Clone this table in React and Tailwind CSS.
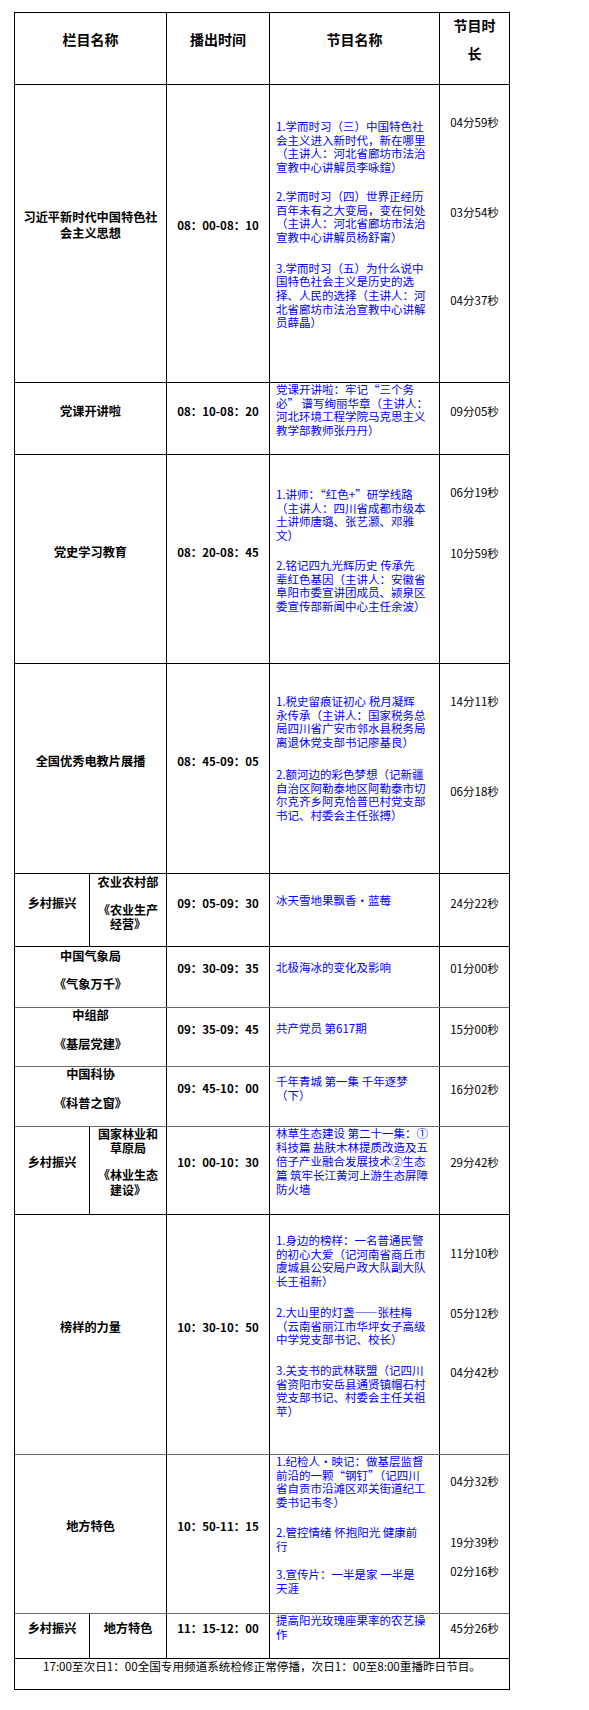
import React from "react";

const cjk = "font-['Noto_Sans_CJK_SC',sans-serif]";

const Row = ({ h, line = "black", children }) => (
  <div
    className={`flex ${h} ${
      line === "none" ? "" : line === "gray" ? "border-t border-[#6a6a6a]" : "border-t border-black"
    }`}
  >
    {children}
  </div>
);

// column shells
const C1 = ({ children }) => (
  <div className="w-[151px] shrink-0 flex flex-col items-center text-[12.2px] leading-[14px] font-bold text-black">
    {children}
  </div>
);
const C1a = ({ children }) => (
  <div className="w-[74px] shrink-0 flex flex-col items-center text-[12.2px] leading-[14px] font-bold text-black">
    {children}
  </div>
);
const C1b = ({ children }) => (
  <div className="w-[77px] shrink-0 border-l border-black flex flex-col items-center text-[12.2px] leading-[14px] font-bold text-black">
    {children}
  </div>
);
const C2 = ({ mt, children }) => (
  <div className="w-[103px] shrink-0 border-l border-black flex flex-col items-center">
    <div className={`${mt} text-[11.5px] leading-[14px] font-bold text-black whitespace-nowrap`}>{children}</div>
  </div>
);
const C3 = ({ children }) => (
  <div className="w-[170px] shrink-0 border-l border-black flex flex-col pl-[6px] text-[11.5px] leading-[13.7px] text-[#0000ff]">
    {children}
  </div>
);
const C4 = ({ children }) => (
  <div className="w-[70px] shrink-0 border-l border-black flex flex-col items-center text-[11.5px] leading-[14px] text-black">
    {children}
  </div>
);

const Ln = ({ className = "", children }) => (
  <div className={`whitespace-nowrap ${className}`}>{children}</div>
);

// several lines kept in one text block, broken by hand
const Blue = ({ mt = "", lines }) => (
  <div className={`whitespace-nowrap ${mt}`}>
    {lines.map((l, i) => (
      <React.Fragment key={i}>
        {i > 0 && <br />}
        {l}
      </React.Fragment>
    ))}
  </div>
);

export default function App() {
  return (
    <div className={`min-h-[1710px] bg-white pt-[12px] pl-[14px] ${cjk}`} lang="zh-CN">
      <div className="w-[496px] border border-black">
        {/* header */}
        <Row h="h-[71px]" line="none">
          <div className="w-[151px] shrink-0 flex flex-col items-center text-[14px] leading-[18px] font-bold">
            <Ln className="mt-[17px]">栏目名称</Ln>
          </div>
          <div className="w-[103px] shrink-0 border-l border-black flex flex-col items-center text-[14px] leading-[18px] font-bold">
            <Ln className="mt-[17px]">播出时间</Ln>
          </div>
          <div className="w-[170px] shrink-0 border-l border-black flex flex-col items-center text-[14px] leading-[18px] font-bold">
            <Ln className="mt-[17px]">节目名称</Ln>
          </div>
          <div className="w-[70px] shrink-0 border-l border-black flex flex-col items-center text-[14px] leading-[18px] font-bold">
            <Ln className="mt-[3px]">节目时</Ln>
            <Ln className="mt-[10px]">长</Ln>
          </div>
        </Row>

        {/* 习近平新时代 */}
        <Row h="h-[298px]">
          <C1>
            <div className="mt-[124px] leading-[16px] text-center whitespace-nowrap">
              习近平新时代中国特色社
              <br />
              会主义思想
            </div>
          </C1>
          <C2 mt="mt-[133px]">08：00-08：10</C2>
          <C3>
            <Blue
              mt="mt-[35px]"
              lines={["1.学而时习（三）中国特色社", "会主义进入新时代，新在哪里", "（主讲人：河北省廊坊市法治", "宣教中心讲解员李咏鍹）"]}
            />
            <Blue
              mt="mt-[15px]"
              lines={["2.学而时习（四）世界正经历", "百年未有之大变局，变在何处", "（主讲人：河北省廊坊市法治", "宣教中心讲解员杨舒甯）"]}
            />
            <Blue
              mt="mt-[17px]"
              lines={["3.学而时习（五）为什么说中", "国特色社会主义是历史的选", "择、人民的选择（主讲人：河", "北省廊坊市法治宣教中心讲解", "员薛晶）"]}
            />
          </C3>
          <C4>
            <Ln className="mt-[30px]">04分59秒</Ln>
            <Ln className="mt-[76px]">03分54秒</Ln>
            <Ln className="mt-[74px]">04分37秒</Ln>
          </C4>
        </Row>

        {/* 党课开讲啦 */}
        <Row h="h-[72px]">
          <C1>
            <Ln className="mt-[21px]">党课开讲啦</Ln>
          </C1>
          <C2 mt="mt-[21px]">08：10-08：20</C2>
          <C3>
            <Blue lines={["党课开讲啦：牢记“三个务", "必” 谱写绚丽华章（主讲人：", "河北环境工程学院马克思主义", "教学部教师张丹丹）"]} />
          </C3>
          <C4>
            <Ln className="mt-[21px]">09分05秒</Ln>
          </C4>
        </Row>

        {/* 党史学习教育 */}
        <Row h="h-[209px]">
          <C1>
            <Ln className="mt-[90px]">党史学习教育</Ln>
          </C1>
          <C2 mt="mt-[90px]">08：20-08：45</C2>
          <C3>
            <Blue
              mt="mt-[33px]"
              lines={["1.讲师：“红色+”研学线路", "（主讲人：四川省成都市级本", "土讲师唐璐、张艺灏、邓雅", "文）"]}
            />
            <Blue
              mt="mt-[16px]"
              lines={["2.铭记四九光辉历史 传承先", "辈红色基因（主讲人：安徽省", "阜阳市委宣讲团成员、颍泉区", "委宣传部新闻中心主任余波）"]}
            />
          </C3>
          <C4>
            <Ln className="mt-[30px]">06分19秒</Ln>
            <Ln className="mt-[47px]">10分59秒</Ln>
          </C4>
        </Row>

        {/* 全国优秀电教片展播 */}
        <Row h="h-[210px]">
          <C1>
            <Ln className="mt-[90px]">全国优秀电教片展播</Ln>
          </C1>
          <C2 mt="mt-[90px]">08：45-09：05</C2>
          <C3>
            <Blue
              mt="mt-[31px]"
              lines={["1.税史留痕证初心 税月凝辉", "永传承（主讲人：国家税务总", "局四川省广安市邻水县税务局", "离退休党支部书记廖基良）"]}
            />
            <Blue
              mt="mt-[18px]"
              lines={["2.额河边的彩色梦想（记新疆", "自治区阿勒泰地区阿勒泰市切", "尔克齐乡阿克恰普巴村党支部", "书记、村委会主任张搏）"]}
            />
          </C3>
          <C4>
            <Ln className="mt-[30px]">14分11秒</Ln>
            <Ln className="mt-[76px]">06分18秒</Ln>
          </C4>
        </Row>

        {/* 乡村振兴 农业农村部 */}
        <Row h="h-[73px]">
          <C1a>
            <Ln className="mt-[22px]">乡村振兴</Ln>
          </C1a>
          <C1b>
            <Ln className="mt-[1px]">农业农村部</Ln>
            <div className="mt-[14px] text-[12px] leading-[14.2px] text-center whitespace-nowrap">
              《农业生产
              <br />
              经营》
            </div>
          </C1b>
          <C2 mt="mt-[22px]">09：05-09：30</C2>
          <C3>
            <Blue mt="mt-[20px]" lines={["冰天雪地果飘香·蓝莓"]} />
          </C3>
          <C4>
            <Ln className="mt-[22px]">24分22秒</Ln>
          </C4>
        </Row>

        {/* 中国气象局 */}
        <Row h="h-[61px]">
          <C1>
            <Ln className="mt-[2px]">中国气象局</Ln>
            <Ln className="mt-[14px]">《气象万千》</Ln>
          </C1>
          <C2 mt="mt-[14px]">09：30-09：35</C2>
          <C3>
            <Blue mt="mt-[14px]" lines={["北极海冰的变化及影响"]} />
          </C3>
          <C4>
            <Ln className="mt-[14px]">01分00秒</Ln>
          </C4>
        </Row>

        {/* 中组部 */}
        <Row h="h-[59px]" line="gray">
          <C1>
            <Ln>中组部</Ln>
            <Ln className="mt-[15px]">《基层党建》</Ln>
          </C1>
          <C2 mt="mt-[14px]">09：35-09：45</C2>
          <C3>
            <Blue mt="mt-[14px]" lines={["共产党员 第617期"]} />
          </C3>
          <C4>
            <Ln className="mt-[14px]">15分00秒</Ln>
          </C4>
        </Row>

        {/* 中国科协 */}
        <Row h="h-[60px]" line="gray">
          <C1>
            <Ln>中国科协</Ln>
            <Ln className="mt-[15px]">《科普之窗》</Ln>
          </C1>
          <C2 mt="mt-[14px]">09：45-10：00</C2>
          <C3>
            <Blue mt="mt-[8px]" lines={["千年青城 第一集 千年逐梦", "（下）"]} />
          </C3>
          <C4>
            <Ln className="mt-[15px]">16分02秒</Ln>
          </C4>
        </Row>

        {/* 乡村振兴 国家林业和草原局 */}
        <Row h="h-[88px]" line="gray">
          <C1a>
            <Ln className="mt-[28px]">乡村振兴</Ln>
          </C1a>
          <C1b>
            <div className="text-[12px] leading-[14.2px] text-center whitespace-nowrap">
              国家林业和
              <br />
              草原局
            </div>
            <div className="mt-[13px] text-[12px] leading-[14.2px] text-center whitespace-nowrap">
              《林业生态
              <br />
              建设》
            </div>
          </C1b>
          <C2 mt="mt-[28px]">10：00-10：30</C2>
          <C3>
            <div className="leading-[13.9px]">
              <Blue
                lines={["林草生态建设 第二十一集：①", "科技篇 盐肤木林提质改造及五", "倍子产业融合发展技术②生态", "篇 筑牢长江黄河上游生态屏障", "防火墙"]}
              />
            </div>
          </C3>
          <C4>
            <Ln className="mt-[28px]">29分42秒</Ln>
          </C4>
        </Row>

        {/* 榜样的力量 */}
        <Row h="h-[240px]">
          <C1>
            <Ln className="mt-[105px]">榜样的力量</Ln>
          </C1>
          <C2 mt="mt-[105px]">10：30-10：50</C2>
          <C3>
            <Blue
              mt="mt-[19px]"
              lines={["1.身边的榜样：一名普通民警", "的初心大爱（记河南省商丘市", "虞城县公安局户政大队副大队", "长王祖新）"]}
            />
            <Blue
              mt="mt-[17px]"
              lines={["2.大山里的灯盏——张桂梅", "（云南省丽江市华坪女子高级", "中学党支部书记、校长）"]}
            />
            <Blue
              mt="mt-[17px]"
              lines={["3.关支书的武林联盟（记四川", "省资阳市安岳县通贤镇帽石村", "党支部书记、村委会主任关祖", "苹）"]}
            />
          </C3>
          <C4>
            <Ln className="mt-[31px]">11分10秒</Ln>
            <Ln className="mt-[46px]">05分12秒</Ln>
            <Ln className="mt-[45px]">04分42秒</Ln>
          </C4>
        </Row>

        {/* 地方特色 */}
        <Row h="h-[159px]" line="gray">
          <C1>
            <Ln className="mt-[64px]">地方特色</Ln>
          </C1>
          <C2 mt="mt-[64px]">10：50-11：15</C2>
          <C3>
            <Blue
              lines={["1.纪检人·映记：做基层监督", "前沿的一颗“钢钉”（记四川", "省自贡市沿滩区邓关街道纪工", "委书记韦冬）"]}
            />
            <Blue mt="mt-[16px]" lines={["2.管控情绪 怀抱阳光 健康前", "行"]} />
            <Blue mt="mt-[15px]" lines={["3.宣传片：一半是家 一半是", "天涯"]} />
          </C3>
          <C4>
            <Ln className="mt-[19px]">04分32秒</Ln>
            <Ln className="mt-[47px]">19分39秒</Ln>
            <Ln className="mt-[15px]">02分16秒</Ln>
          </C4>
        </Row>

        {/* 乡村振兴 地方特色 */}
        <Row h="h-[45px]" line="gray">
          <C1a>
            <Ln className="mt-[7px]">乡村振兴</Ln>
          </C1a>
          <C1b>
            <Ln className="mt-[7px]">地方特色</Ln>
          </C1b>
          <C2 mt="mt-[7px]">11：15-12：00</C2>
          <C3>
            <Blue lines={["提高阳光玫瑰座果率的农艺操", "作"]} />
          </C3>
          <C4>
            <Ln className="mt-[7px]">45分26秒</Ln>
          </C4>
        </Row>

        {/* footer note */}
        <Row h="h-[31px]">
          <div className="w-full text-center text-[11.6px] leading-[14px] text-black">
            <Ln>17:00至次日1：00全国专用频道系统检修正常停播，次日1：00至8:00重播昨日节目。</Ln>
          </div>
        </Row>
      </div>
    </div>
  );
}
